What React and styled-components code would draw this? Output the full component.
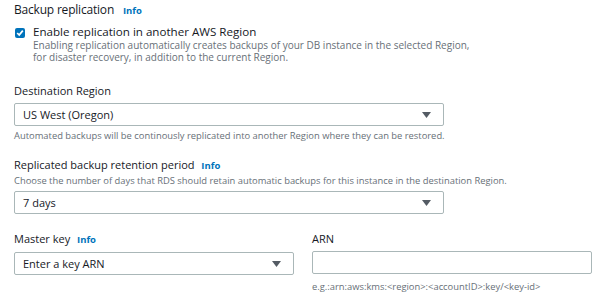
import React from "react";
import styled, { createGlobalStyle } from "styled-components";

const GlobalStyle = createGlobalStyle`
  html, body {
    margin: 0;
    padding: 0;
    background: #fff;
  }
  body {
    font-family: "Open Sans", "Noto Sans", sans-serif;
    color: #16191f;
  }
`;

const Caret = () => (
  <svg width="9" height="6" viewBox="0 0 9 6">
    <path d="M0 0 H9 L4.5 6 Z" fill="#545b64" />
  </svg>
);

const Select = ({ value, width, top }) => (
  <SelectBox width={width} top={top}>
    <span>{value}</span>
    <Caret />
  </SelectBox>
);

const App = () => {
  return (
    <Page>
      <GlobalStyle />
      <Heading>
        Backup replication <Info>Info</Info>
      </Heading>
      <CheckRow>
        <CheckBox>
          <svg width="8" height="8" viewBox="0 0 10 10">
            <path d="M1.5 5 L4 7.5 L8.5 2" fill="none" stroke="#fff" strokeWidth="2.2" />
          </svg>
        </CheckBox>
        <div>
          <CheckLabel>Enable replication in another AWS Region</CheckLabel>
          <Description>
            Enabling replication automatically creates backups of your DB instance in the selected Region,
            <br />
            for disaster recovery, in addition to the current Region.
          </Description>
        </div>
      </CheckRow>

      <Field top="19px">
        <Label>Destination Region</Label>
        <Select value="US West (Oregon)" width="430px" />
        <Hint top="4px">
          Automated backups will be continously replicated into another Region where they can be restored.
        </Hint>
      </Field>

      <Field top="14px">
        <Label>
          Replicated backup retention period <Info>Info</Info>
        </Label>
        <Hint top="-3px">
          Choose the number of days that RDS should retain automatic backups for this instance in the destination Region.
        </Hint>
        <Select value="7 days" width="430px" top="4px" />
      </Field>

      <KeyRow>
        <Field>
          <Label>
            Master key <Info>Info</Info>
          </Label>
          <Select value="Enter a key ARN" width="280px" />
        </Field>
        <Field>
          <Label>ARN</Label>
          <Input />
          <Hint top="7px">e.g.:arn:aws:kms:&lt;region&gt;:&lt;accountID&gt;:key/&lt;key-id&gt;</Hint>
        </Field>
      </KeyRow>
    </Page>
  );
};

export default App;

const Page = styled.div`
  width: 600px;
  height: 303px;
  box-sizing: border-box;
  padding: 0 14px;
  overflow: hidden;
`;

const Heading = styled.div`
  font-size: 12px;
  line-height: 20px;
  font-weight: 500;
  letter-spacing: -0.2px;
`;

const Info = styled.span`
  color: #0073bb;
  font-size: 9.5px;
  font-weight: 700;
  letter-spacing: 0;
  margin-left: 6px;
`;

const CheckRow = styled.div`
  display: flex;
  gap: 8px;
  margin-top: 3px;
  padding-left: 1px;
`;

const CheckBox = styled.div`
  width: 10px;
  height: 10px;
  margin-top: 4px;
  border-radius: 2px;
  background: #0073bb;
  display: flex;
  align-items: center;
  justify-content: center;
  flex-shrink: 0;
`;

const CheckLabel = styled.div`
  font-size: 11.6px;
  line-height: 16px;
  font-weight: 500;
`;

const Description = styled.div`
  margin-top: -1px;
  font-size: 10px;
  line-height: 12px;
  color: #687078;
`;

const Field = styled.div`
  margin-top: ${({ top }) => top || "0"};
  display: flex;
  flex-direction: column;
`;

const Label = styled.div`
  font-size: 11px;
  line-height: 18px;
  font-weight: 500;
  margin-bottom: 3px;
  ${Info} {
    margin-left: 4px;
  }
`;

const SelectBox = styled.div`
  width: ${({ width }) => width};
  height: 23px;
  margin-top: ${({ top }) => top || "0"};
  box-sizing: border-box;
  border: 1px solid #aab7b8;
  border-radius: 2px;
  display: flex;
  align-items: center;
  justify-content: space-between;
  padding: 0 12px 0 8px;
  font-size: 11px;
  font-weight: 500;
`;

const Hint = styled.div`
  margin-top: ${({ top }) => top || "0"};
  font-size: 9.4px;
  line-height: 12px;
  color: #687078;
`;

const KeyRow = styled.div`
  display: grid;
  grid-template-columns: 280px 280px;
  column-gap: 18px;
  margin-top: 16px;
`;

const Input = styled.div`
  height: 23px;
  box-sizing: border-box;
  border: 1px solid #aab7b8;
  border-radius: 2px;
`;
